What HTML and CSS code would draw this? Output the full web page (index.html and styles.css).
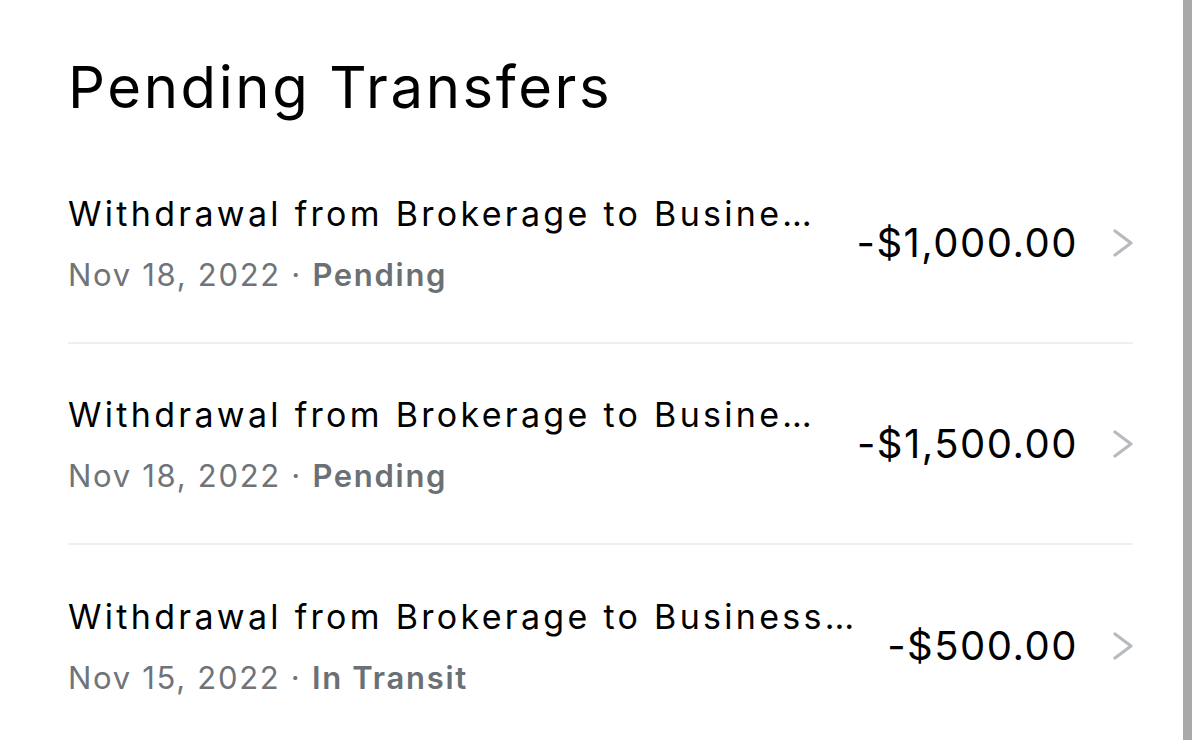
FILE: index.html
```html
<!DOCTYPE html>
<html lang="en">
<head>
    <meta charset="UTF-8">
    <meta name="viewport" content="width=device-width, initial-scale=1.0">
    <title>Pending Transfers</title>
    <link rel="stylesheet" href="styles.css">
</head>
<body>
    <div class="app">
        <main class="content">
            <h1 class="page-title">Pending Transfers</h1>

            <ul class="transfer-list">
                <li class="transfer">
                    <div class="transfer-info">
                        <div class="transfer-name">Withdrawal from Brokerage to Busine…</div>
                        <div class="transfer-meta">Nov 18, 2022 · <span class="status">Pending</span></div>
                    </div>
                    <div class="transfer-amount">-$1,000.00</div>
                    <svg class="chevron" viewBox="0 0 20 28" aria-hidden="true"><path d="M2 2 L18 14 L2 26"/></svg>
                </li>
                <li class="transfer">
                    <div class="transfer-info">
                        <div class="transfer-name">Withdrawal from Brokerage to Busine…</div>
                        <div class="transfer-meta">Nov 18, 2022 · <span class="status">Pending</span></div>
                    </div>
                    <div class="transfer-amount">-$1,500.00</div>
                    <svg class="chevron" viewBox="0 0 20 28" aria-hidden="true"><path d="M2 2 L18 14 L2 26"/></svg>
                </li>
                <li class="transfer">
                    <div class="transfer-info">
                        <div class="transfer-name">Withdrawal from Brokerage to Business…</div>
                        <div class="transfer-meta">Nov 15, 2022 · <span class="status">In Transit</span></div>
                    </div>
                    <div class="transfer-amount">-$500.00</div>
                    <svg class="chevron" viewBox="0 0 20 28" aria-hidden="true"><path d="M2 2 L18 14 L2 26"/></svg>
                </li>
            </ul>
        </main>
        <div class="scrollbar"></div>
    </div>
</body>
</html>
```

FILE: styles.css
```css
html, body {
    margin: 0;
    padding: 0;
    background-color: #ffffff;
}

body {
    font-family: Inter, "Noto Sans", sans-serif;
    color: #000000;
}

.app {
    display: flex;
    height: 740px;
    overflow: hidden;
}

.content {
    flex: 1;
    min-width: 0;
    padding: 0 50px 0 68px;
}

.scrollbar {
    width: 9px;
    margin-right: 8px;
    background-color: #a9a9a9;
}

.page-title {
    margin: 0;
    height: 143px;
    padding-top: 52px;
    box-sizing: border-box;
    font-size: 58px;
    font-weight: 400;
    line-height: 70px;
    letter-spacing: 2.6px;
}

.transfer-list {
    list-style: none;
    margin: 0;
    padding: 0;
}

.transfer {
    display: flex;
    align-items: center;
    height: 201px;
    box-sizing: border-box;
    border-bottom: 2px solid #efefef;
}

.transfer:last-child {
    border-bottom: none;
}

.transfer-info {
    flex: 1;
    min-width: 0;
    margin-top: 4px;
}

.transfer-name {
    font-size: 34px;
    line-height: 44px;
    letter-spacing: 3.3px;
    white-space: nowrap;
    overflow: hidden;
}

.transfer-meta {
    margin-top: 17px;
    font-size: 31px;
    line-height: 44px;
    letter-spacing: 1.7px;
    color: #707479;
}

.status {
    font-weight: 600;
    color: #6b7075;
}

.transfer-amount {
    margin-left: 20px;
    font-size: 40px;
    letter-spacing: 1.5px;
    white-space: nowrap;
}

.chevron {
    flex-shrink: 0;
    width: 20px;
    height: 28px;
    margin-left: 35px;
    fill: none;
    stroke: #b7bbc0;
    stroke-width: 3.2;
    stroke-linecap: round;
    stroke-linejoin: round;
}
```
